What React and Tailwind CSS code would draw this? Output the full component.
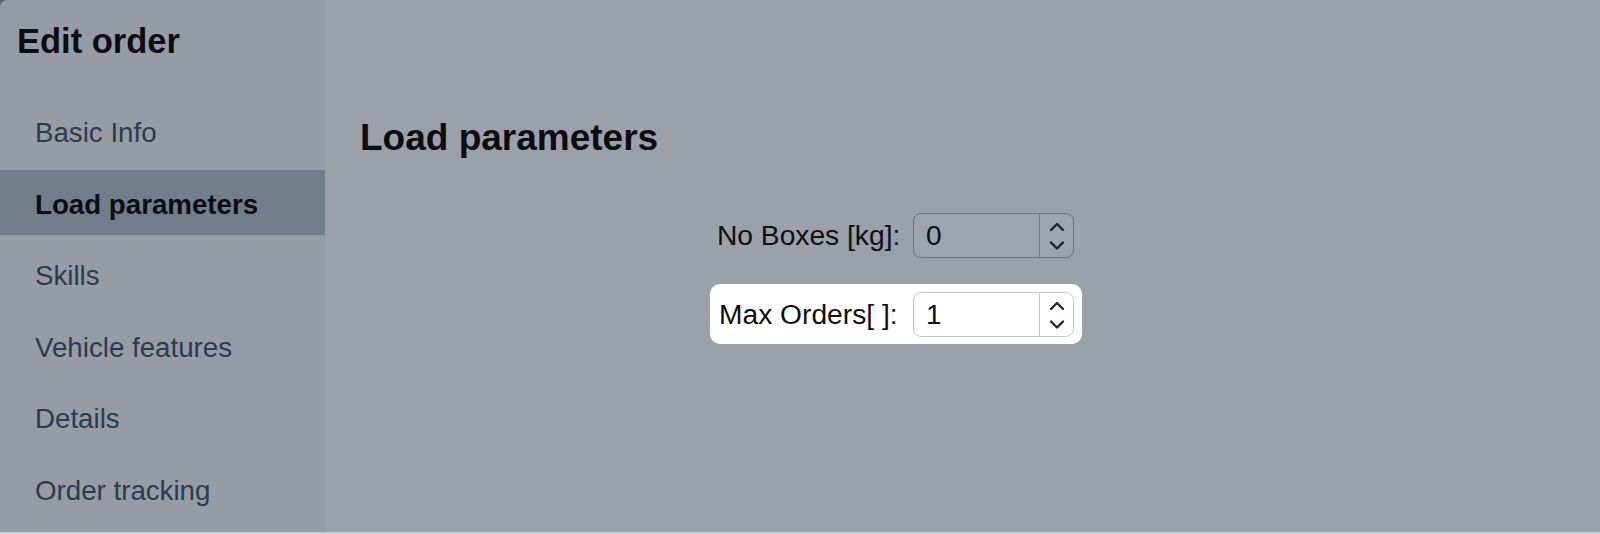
import React from "react";

function Chevrons({ color }) {
  return (
    <svg width="16" height="32" viewBox="0 0 16 32" fill="none" stroke={color} strokeWidth="2.4" strokeLinecap="round" strokeLinejoin="round">
      <path d="M2 10 L8 4 L14 10" />
      <path d="M2 22.5 L8 28.5 L14 22.5" />
    </svg>
  );
}

function NumberInput({ value, highlighted }) {
  const wrap = highlighted
    ? "border-[#c3c6ce] bg-white"
    : "border-[#6d727c] bg-[#9fa3ab]";
  const divider = highlighted ? "border-[#c3c6ce]" : "border-[#767b85]";
  return (
    <div className={`flex h-[45px] w-[161px] rounded-[8px] border ${wrap}`}>
      <div className="flex flex-1 items-center pl-[12px] text-[28px] leading-none text-[#0d0f14]">{value}</div>
      <div className={`flex w-[34px] items-center justify-center border-l ${divider}`}>
        <Chevrons color={highlighted ? "#1f2633" : "#1b2230"} />
      </div>
    </div>
  );
}

export default function App() {
  const items = ["Basic Info", "Load parameters", "Skills", "Vehicle features", "Details", "Order tracking"];
  return (
    <div className="flex h-[534px] w-[1600px] flex-col overflow-hidden bg-[#5d6168] font-['Liberation_Sans',Arial,sans-serif]">
      <div className="flex h-[532px] overflow-hidden rounded-tl-[8px] bg-[#9ca0a8]">
        <aside className="flex w-[325px] flex-col bg-[#979ba3]">
          <h1 className="pl-[17px] pt-[23.5px] text-[34.5px] font-bold leading-none text-[#0b0d12]">Edit order</h1>
          <nav className="mt-[40.5px] flex flex-col gap-[6.5px]">
            {items.map((it) => {
              const active = it === "Load parameters";
              return (
                <div
                  key={it}
                  className={`flex h-[65px] items-center pl-[35px] text-[27.7px] leading-none ${
                    active ? "bg-[#737c89] font-bold text-[#0b0d12]" : "text-[#2d3b50]"
                  }`}
                >
                  <span className="relative top-[2px]">{it}</span>
                </div>
              );
            })}
          </nav>
        </aside>
        <main className="flex flex-1 flex-col items-start pl-[35px] pt-[119px]">
          <h2 className="text-[37px] font-bold leading-none text-[#0b0d12]">Load parameters</h2>
          <div className="ml-[357px] mt-[57px] flex flex-col gap-[34px]">
            <div className="flex items-center">
              <div className="w-[196px] text-[28.2px] leading-none text-[#0d0f14]">No Boxes [kg]:</div>
              <NumberInput value="0" />
            </div>
            <div className="relative flex items-center">
              <div className="absolute -bottom-[7px] -left-[7px] -right-[8px] -top-[8px] rounded-[10px] bg-white" />
              <div className="relative w-[196px] pl-[2px] text-[28.2px] leading-none text-[#0d0f14]">Max Orders[ ]:</div>
              <div className="relative">
                <NumberInput value="1" highlighted />
              </div>
            </div>
          </div>
        </main>
      </div>
      <div className="h-[2px] bg-[#c9ccd1]" />
    </div>
  );
}
